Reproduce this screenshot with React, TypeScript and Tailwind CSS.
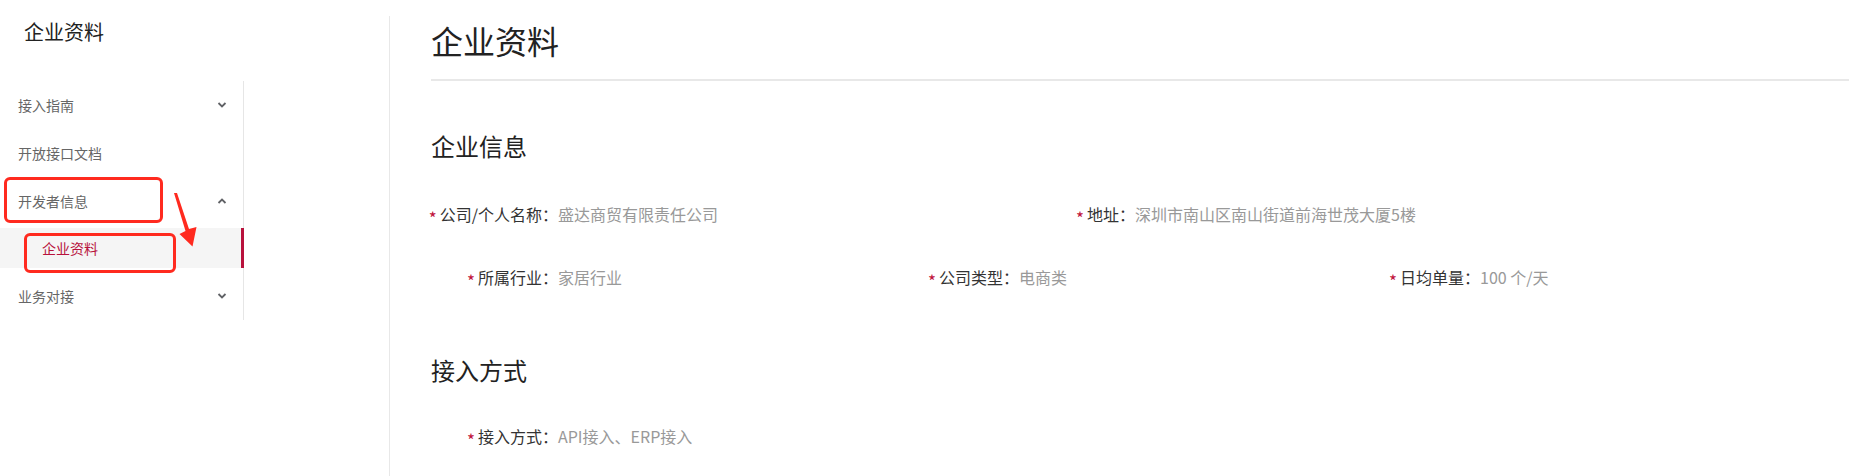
import React from 'react';

const Chevron = ({ up = false }: { up?: boolean }) => (
  <svg width="10" height="6" viewBox="0 0 10 6" className="shrink-0">
    <polyline
      points={up ? '1.5,5 5,1.5 8.5,5' : '1.5,1 5,4.5 8.5,1'}
      fill="none"
      stroke="#606266"
      strokeWidth="1.8"
    />
  </svg>
);

type Field = { label: string; value: string };

const FormItem = ({ label, value, width }: Field & { width: string }) => (
  <div className={`flex items-center ${width}`}>
    <div className="w-[127px] shrink-0 flex items-center justify-end whitespace-nowrap text-[#333]">
      <span className="relative top-[3px] text-[17px] text-[#c0143c] mr-[3px] leading-none">*</span>
      <span>{label}：</span>
    </div>
    <span className="text-[#999] whitespace-nowrap">{value}</span>
  </div>
);

export default function App() {
  const menu = [
    { name: '接入指南', arrow: 'down' },
    { name: '开放接口文档', arrow: '' },
    { name: '开发者信息', arrow: 'up' },
  ];

  return (
    <div className="relative flex w-full h-[476px] bg-white pt-[16px] font-['Microsoft_YaHei','Noto_Sans_CJK_SC',sans-serif] overflow-hidden">
      {/* sidebar */}
      <aside className="w-[389px] shrink-0">
        <h2 className="pl-[24px] text-[20px] leading-[32px] text-[#222]">企业资料</h2>
        <nav className="mt-[33px] w-[244px] border-r border-[#e6e6e6] text-[14px] text-[#666]">
          {menu.map((m) => (
            <div key={m.name} className="h-[48px] flex items-center justify-between pl-[18px] pr-[16px]">
              <span>{m.name}</span>
              {m.arrow && <Chevron up={m.arrow === 'up'} />}
            </div>
          ))}
          <div className="pt-[3px] pb-[4px]">
            <div className="h-[40px] flex items-center pl-[42px] bg-[#f5f5f5] border-r-[3px] border-[#b8123c] -mr-px text-[#b8123c]">
              企业资料
            </div>
          </div>
          <div className="h-[48px] flex items-center justify-between pl-[18px] pr-[16px]">
            <span>业务对接</span>
            <Chevron />
          </div>
        </nav>
      </aside>

      {/* annotations */}
      <div className="absolute left-[4px] top-[177px] w-[159px] h-[46px] rounded-[6px] border-[3px] border-[#ff2a1f] pointer-events-none" />
      <div className="absolute left-[24px] top-[233px] w-[152px] h-[40px] rounded-[6px] border-[3px] border-[#ff2a1f] pointer-events-none" />
      <svg className="absolute left-0 top-0 pointer-events-none" width="220" height="260" viewBox="0 0 220 260">
        <polygon
          points="174,193 177,193 189,229 196.5,227 192.5,246.5 179.5,234 185.5,231"
          fill="#ff2a1f"
        />
      </svg>

      {/* main */}
      <main className="flex-1 border-l border-[#e8e8e8] pl-[41px] pr-[12px] text-[16px]">
        <h1 className="text-[32px] leading-[48px] text-[#222]">企业资料</h1>
        <div className="mt-[15px] h-[2px] bg-[#e8e8e8]" />

        <h3 className="mt-[49px] text-[24px] leading-[32px] text-[#222]">企业信息</h3>
        <div className="mt-[40px] flex leading-[24px]">
          <FormItem width="w-[577px]" label="公司/个人名称" value="盛达商贸有限责任公司" />
          <FormItem width="w-[577px]" label="地址" value="深圳市南山区南山街道前海世茂大厦5楼" />
        </div>
        <div className="mt-[39px] flex leading-[24px]">
          <FormItem width="w-[461px]" label="所属行业" value="家居行业" />
          <FormItem width="w-[461px]" label="公司类型" value="电商类" />
          <FormItem width="w-[461px]" label="日均单量" value="100 个/天" />
        </div>

        <h3 className="mt-[65px] text-[24px] leading-[32px] text-[#222]">接入方式</h3>
        <div className="mt-[38px] flex leading-[24px]">
          <FormItem width="w-[577px]" label="接入方式" value="API接入、ERP接入" />
        </div>
      </main>
    </div>
  );
}
